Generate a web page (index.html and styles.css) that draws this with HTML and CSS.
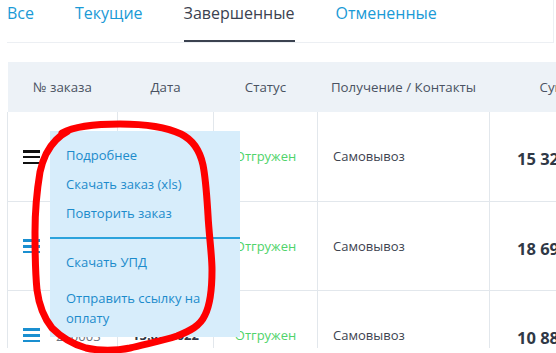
FILE: index.html
```html
<!DOCTYPE html>
<html lang="ru">
<head>
<meta charset="utf-8">
<link rel="stylesheet" href="styles.css">
</head>
<body>
<div class="page">
  <nav class="tabs">
    <a class="tab">Все</a>
    <a class="tab">Текущие</a>
    <a class="tab active">Завершенные</a>
    <a class="tab">Отмененные</a>
  </nav>
  <div class="table-wrap">
    <table class="orders">
      <colgroup>
        <col class="c1"><col class="c2"><col class="c3"><col class="c4"><col class="c5">
      </colgroup>
      <thead>
        <tr>
          <th>№ заказа</th>
          <th>Дата</th>
          <th>Статус</th>
          <th>Получение / Контакты</th>
          <th>Сумма</th>
        </tr>
      </thead>
      <tbody>
        <tr>
          <td class="num"><span class="burger dark"><i></i><i></i><i></i></span><span class="no">200001</span></td>
          <td class="date">21.02.2022</td>
          <td class="status">Отгружен</td>
          <td class="delivery">Самовывоз</td>
          <td class="sum">15 320 ₽</td>
        </tr>
        <tr>
          <td class="num"><span class="burger"><i></i><i></i><i></i></span><span class="no">200002</span></td>
          <td class="date">18.02.2022</td>
          <td class="status">Отгружен</td>
          <td class="delivery">Самовывоз</td>
          <td class="sum">18 690 ₽</td>
        </tr>
        <tr>
          <td class="num"><span class="burger"><i></i><i></i><i></i></span><span class="no">200003</span></td>
          <td class="date">15.02.2022</td>
          <td class="status">Отгружен</td>
          <td class="delivery">Самовывоз</td>
          <td class="sum">10 880 ₽</td>
        </tr>
      </tbody>
    </table>
    <div class="menu">
      <ul class="group first">
        <li>Подробнее</li>
        <li>Скачать заказ (xls)</li>
        <li>Повторить заказ</li>
      </ul>
      <ul class="group second">
        <li>Скачать УПД</li>
        <li>Отправить ссылку на оплату</li>
      </ul>
    </div>
  </div>
  <svg class="mark" width="556" height="353" viewBox="0 0 556 353">
    <path d="M62 133 C 75 126, 100 124, 120 124 C 145 124, 166 127, 181 134 C 193 140, 200 151, 203 165 C 206 180, 207 200, 208 215 C 209 235, 212 255, 212 270 C 212 290, 210 305, 205 315 C 200 326, 190 331, 177 336 C 162 341, 145 344, 130 348 C 115 351, 100 351, 86 348 C 72 344, 60 336, 52 328 C 44 318, 39 305, 37 290 C 35 270, 35 250, 35 232 C 35 210, 37 190, 40 172 C 43 158, 48 148, 56 140 C 60 136, 64 133, 68 131" fill="none" stroke="#ff0000" stroke-width="7" stroke-linecap="round" stroke-linejoin="round"/>
  </svg>
</div>
</body>
</html>
```

FILE: styles.css
```css
* { box-sizing: border-box; }
html, body { margin: 0; padding: 0; }
body {
  width: 556px;
  height: 353px;
  overflow: hidden;
  background: #fff;
  font-family: "Open Sans", "Noto Sans", sans-serif;
}
.page {
  position: relative;
  width: 556px;
  height: 353px;
  padding-left: 7px;
}
.tabs {
  display: flex;
  width: 547px;
  height: 43px;
  border-bottom: 1px solid #eceff3;
  border-right: 1px solid #eceff3;
}
.tab {
  display: block;
  margin-right: 41px;
  padding-top: 2px;
  height: 42px;
  font-size: 16px;
  line-height: 22px;
  color: #1a9ad6;
}
.tab.active {
  color: #3b4250;
  border-bottom: 2px solid #3b4250;
}
.table-wrap {
  position: relative;
  margin-top: 19px;
  width: 624px;
  height: 286px;
  overflow: hidden;
}
.orders {
  border-collapse: collapse;
  table-layout: fixed;
  width: 624px;
}
.c1 { width: 110px; }
.c2 { width: 96px; }
.c3 { width: 104px; }
.c4 { width: 172px; }
.c5 { width: 142px; }
.orders th {
  height: 50px;
  background: #edf2f7;
  font-weight: 400;
  font-size: 13.3px;
  color: #4a5262;
  text-align: center;
  vertical-align: middle;
  padding: 0;
  white-space: nowrap;
}
.orders td {
  height: 89px;
  border: 1px solid #e2e7ec;
  border-top: none;
  vertical-align: middle;
  padding: 0;
  font-size: 13px;
  white-space: nowrap;
}
.orders .num {
  padding-left: 15px;
}
.burger {
  display: inline-flex;
  flex-direction: column;
  justify-content: space-between;
  width: 17px;
  height: 14px;
  vertical-align: middle;
  margin-right: 16px;
}
.burger i {
  display: block;
  height: 2.5px;
  background: #1a8fd0;
}
.burger.dark i { background: #111; }
.no { color: #6b7280; font-size: 13px; vertical-align: middle; }
.orders .date { text-align: center; color: #2f3643; font-weight: 700; }
.orders .status { text-align: center; color: #4fd36a; }
.orders .delivery { padding-left: 15px; color: #3d4350; }
.orders .sum { padding-left: 27px; padding-top: 5px; font-weight: 700; font-size: 16.5px; color: #2f3846; }

.menu {
  position: absolute;
  left: 43px;
  top: 69px;
  width: 190px;
  height: 206px;
  background: #d7edfb;
}
.group {
  list-style: none;
  margin: 0;
  padding: 0;
}
.group li {
  padding: 4px 16px;
  font-size: 13px;
  line-height: 21px;
  color: #1c8bcb;
}
.group.first {
  padding-top: 10px;
  padding-bottom: 9px;
  border-bottom: 2px solid #2ba3dc;
}
.group.second { padding-top: 5px; }
.group.second li { padding: 8px 16px; line-height: 20px; }
.mark {
  position: absolute;
  left: 0;
  top: 0;
  pointer-events: none;
}
```
